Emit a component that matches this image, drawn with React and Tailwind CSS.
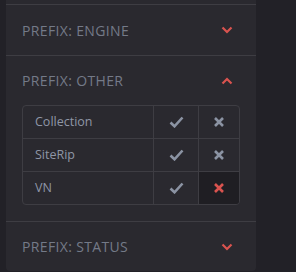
import React from 'react';

function Chevron({ up }) {
  return (
    <svg width="12" height="8" viewBox="0 0 12 8" fill="none">
      <path
        d={up ? 'M1.5 6.5L6 2l4.5 4.5' : 'M1.5 1.5L6 6l4.5-4.5'}
        stroke="#d9534f"
        strokeWidth="2.2"
      />
    </svg>
  );
}

function Check() {
  return (
    <svg width="15" height="12" viewBox="0 0 15 12" fill="none">
      <path d="M1.5 6.5l4 3.8L13.5 1.5" stroke="#8b93a3" strokeWidth="2.6" />
    </svg>
  );
}

function Cross({ red }) {
  return (
    <svg width="10" height="10" viewBox="0 0 10 10" fill="none">
      <path d="M1 1l8 8M9 1L1 9" stroke={red ? '#d9534f' : '#8b93a3'} strokeWidth="2.6" />
    </svg>
  );
}

function Header({ title, up, tall }) {
  return (
    <div
      className={`flex items-center justify-between shrink-0 pl-4 pr-[23px] ${
        tall ? 'h-[50px]' : 'h-[49px]'
      }`}
    >
      <span className="text-[14px] text-[#747a88] tracking-[0.35px]">{title}</span>
      <Chevron up={up} />
    </div>
  );
}

const rows = [
  { name: 'Collection', excluded: false },
  { name: 'SiteRip', excluded: false },
  { name: 'VN', excluded: true },
];

export default function App() {
  return (
    <div
      className="w-[296px] h-[272px] bg-[#222127] overflow-hidden"
      style={{ fontFamily: '"Open Sans", sans-serif' }}
    >
      <div className="ml-[6px] w-[250px] bg-[#2a292f] rounded-b-[4px] flex flex-col">
        <div className="h-[4px] shrink-0 border-b border-[#3e3d43] box-content" />
        <Header title="PREFIX: ENGINE" tall />
        <div className="border-t border-[#3e3d43]">
          <Header title="PREFIX: OTHER" up />
          <div className="mx-4 mb-[16px] border border-[#3e3d43] rounded-[4px] overflow-hidden">
            {rows.map((r, i) => (
              <div
                key={r.name}
                className={`flex h-[32px] box-content ${i > 0 ? 'border-t border-[#3e3d43]' : ''}`}
              >
                <div className="flex-1 flex items-center pl-3 text-[12.5px] text-[#8f96a6]">
                  {r.name}
                </div>
                <div className="w-[45px] border-l border-[#3e3d43] flex items-center justify-center">
                  <Check />
                </div>
                <div
                  className={`w-[41px] border-l border-[#3e3d43] flex items-center justify-center ${
                    r.excluded ? 'bg-[#1f1e23]' : ''
                  }`}
                >
                  <Cross red={r.excluded} />
                </div>
              </div>
            ))}
          </div>
        </div>
        <div className="border-t border-[#3e3d43]">
          <Header title="PREFIX: STATUS" />
        </div>
      </div>
    </div>
  );
}
